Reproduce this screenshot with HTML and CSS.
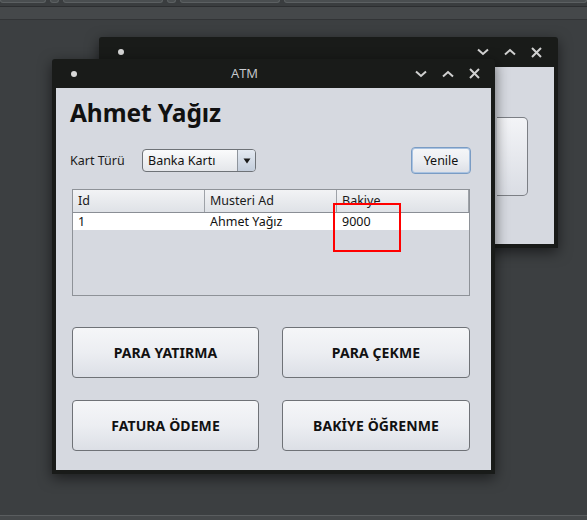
FILE: index.html
```html
<!DOCTYPE html>
<html>
<head>
<meta charset="utf-8">
<link rel="stylesheet" href="styles.css">
</head>
<body>
<div class="desktop">
  <div class="topbar">
    <div class="tabs">
      <span class="tab t1"></span><span class="tab t2"></span><span class="tab t3"></span><span class="tab t2"></span><span class="tab t3"></span><span class="tab t4"></span>
    </div>
    <div class="band"></div>
  </div>

  <div class="window back">
    <div class="titlebar">
      <span class="dot"></span>
      <span class="title"></span>
      <div class="controls">
        <svg width="12" height="8" viewBox="0 0 12 8"><path d="M1 1.5 L6 6 L11 1.5" fill="none" stroke="#d0d0d0" stroke-width="2"/></svg>
        <svg width="12" height="8" viewBox="0 0 12 8"><path d="M1 6.5 L6 2 L11 6.5" fill="none" stroke="#d0d0d0" stroke-width="2"/></svg>
        <svg width="11" height="11" viewBox="0 0 11 11"><path d="M1 1 L10 10 M10 1 L1 10" fill="none" stroke="#d0d0d0" stroke-width="2"/></svg>
      </div>
    </div>
    <div class="back-content">
      <div class="back-btn"></div>
    </div>
  </div>

  <div class="window front">
    <div class="titlebar">
      <span class="dot"></span>
      <span class="title">ATM</span>
      <div class="controls">
        <svg width="12" height="8" viewBox="0 0 12 8"><path d="M1 1.5 L6 6 L11 1.5" fill="none" stroke="#d0d0d0" stroke-width="2"/></svg>
        <svg width="12" height="8" viewBox="0 0 12 8"><path d="M1 6.5 L6 2 L11 6.5" fill="none" stroke="#d0d0d0" stroke-width="2"/></svg>
        <svg width="11" height="11" viewBox="0 0 11 11"><path d="M1 1 L10 10 M10 1 L1 10" fill="none" stroke="#d0d0d0" stroke-width="2"/></svg>
      </div>
    </div>
    <div class="content">
      <h1 class="name">Ahmet Yağız</h1>
      <div class="row">
        <span class="label">Kart Türü</span>
        <div class="combo">
          <span class="combo-text">Banka Kartı</span>
          <span class="combo-arrow"><svg width="8" height="6" viewBox="0 0 8 6"><path d="M0.5 0.5 L7.5 0.5 L4 5.5 Z" fill="#1a1a1a"/></svg></span>
        </div>
        <button class="btn yenile">Yenile</button>
      </div>
      <div class="table">
        <div class="thead">
          <div class="th c1">Id</div>
          <div class="th c2">Musteri Ad</div>
          <div class="th c3">Bakiye</div>
        </div>
        <div class="tr">
          <div class="td c1">1</div>
          <div class="td c2">Ahmet Yağız</div>
          <div class="td c3">9000</div>
        </div>
        <div class="highlight"></div>
      </div>
      <div class="actions">
        <button class="btn action">PARA YATIRMA</button>
        <button class="btn action">PARA ÇEKME</button>
        <button class="btn action">FATURA ÖDEME</button>
        <button class="btn action">BAKİYE ÖĞRENME</button>
      </div>
    </div>
  </div>

  <div class="bottombar"></div>
</div>
</body>
</html>
```

FILE: styles.css
```css
* { box-sizing: border-box; }
html, body { margin: 0; padding: 0; }
body {
  background: #3c3f41;
  font-family: "Noto Sans", "Open Sans", "DejaVu Sans", sans-serif;
  width: 587px;
  height: 520px;
  overflow: hidden;
}
.desktop {
  position: relative;
  width: 587px;
  height: 520px;
}
.topbar { display: flex; flex-direction: column; }
.tabs {
  height: 7px;
  display: flex;
  gap: 4px;
  background: #3a3d3f;
  border-bottom: 1px solid #2c2e30;
}
.tab {
  height: 3px;
  background: #4a4e50;
  border: 1px solid #5c6062;
  border-top: none;
  border-radius: 0 0 3px 3px;
}
.t1 { width: 46px; }
.t2 { width: 9px; }
.t3 { width: 100px; }
.t4 { flex: 1; }
.band {
  height: 13px;
  background: #45484a;
  border-bottom: 1px solid #323436;
}
.bottombar {
  position: absolute;
  left: 0; right: 0; top: 515px; bottom: 0;
  background: #45484a;
  border-top: 1px solid #5a5d5f;
}

.window {
  position: absolute;
  background: #191b19;
  box-shadow: 0 4px 14px rgba(0,0,0,0.55);
  border-radius: 3px 3px 0 0;
  display: flex;
  flex-direction: column;
  padding: 0 4px 4px 4px;
}
.back { left: 99px; top: 37px; width: 459px; height: 211px; }
.front { left: 52px; top: 59px; width: 443px; height: 415px; }

.titlebar {
  height: 29px;
  flex: none;
  display: flex;
  align-items: center;
  position: relative;
  padding-left: 15px;
}
.back .titlebar { height: 30px; }
.dot {
  width: 6px; height: 6px; border-radius: 50%;
  background: #d8d8d8;
}
.title {
  position: absolute;
  left: 0; right: 58px;
  text-align: center;
  color: #c9ccd0;
  font-family: "Open Sans", "Noto Sans", sans-serif;
  font-size: 13px;
  top: 5px;
}
.controls {
  margin-left: auto;
  display: flex;
  align-items: center;
  gap: 15px;
  padding-right: 11px;
  position: relative;
  z-index: 1;
}
.back .controls { padding-right: 12px; }

.back-content {
  flex: 1;
  background: #d6d9e0;
  padding: 50px 26px 0 394px;
}
.back-btn {
  width: 31px;
  height: 79px;
  border: 1px solid #7c7f85;
  border-left: none;
  border-radius: 0 5px 5px 0;
  background: linear-gradient(#f3f4f7, #dadde4);
}

.content {
  flex: 1;
  background: #d6d9e0;
  padding: 0 21px 19px 16px;
  display: flex;
  flex-direction: column;
}
.name {
  margin: 9px 0 0 -2px;
  font-size: 24.5px;
  font-weight: 700;
  line-height: 32px;
  color: #111;
  letter-spacing: -0.1px;
}
.row {
  display: flex;
  align-items: center;
  margin-top: 18px;
  height: 27px;
}
.label {
  font-size: 12.5px;
  color: #1a1a1a;
  margin-left: -2px;
  width: 72px;
}
.combo {
  width: 114px;
  height: 23px;
  display: flex;
  border: 1px solid #6e7277;
  border-radius: 4px;
  background: linear-gradient(#fafbfc, #e4e6ea);
  overflow: hidden;
}
.combo-text {
  flex: 1;
  font-size: 12.5px;
  color: #111;
  padding-left: 5px;
  line-height: 21px;
}
.combo-arrow {
  width: 18px;
  border-left: 1px solid #8e949c;
  background: linear-gradient(#e4eaf2, #c3cddb);
  display: flex;
  align-items: center;
  justify-content: center;
}
.btn {
  font-family: "Noto Sans", "Open Sans", sans-serif;
  border: 1px solid #6f7277;
  border-radius: 4px;
  background: linear-gradient(#f5f6f8 0%, #eceef2 50%, #dcdfe6 100%);
  color: #111;
  padding: 0;
  cursor: default;
}
.yenile {
  margin-left: auto;
  margin-right: -1px;
  width: 60px;
  height: 27px;
  font-size: 12.5px;
  border: 1px solid #7a9cc4;
  box-shadow: inset 0 0 0 1px #a9c3e2;
}

.table {
  position: relative;
  margin-top: 15px;
  height: 107px;
  border: 1px solid #8e9298;
  background: #d6d9e0;
}
.thead {
  display: flex;
  height: 23px;
  background: linear-gradient(#f2f3f5, #dfe2e7);
  border-bottom: 1px solid #8a8e95;
}
.th {
  font-size: 12.5px;
  color: #1a1a1a;
  line-height: 22px;
  padding-left: 5px;
  border-right: 1px solid #9ea2a8;
}
.c1 { width: 132px; }
.c2 { width: 132px; }
.c3 { width: 132px; }
.tr {
  display: flex;
  height: 17px;
  background: #ffffff;
}
.td {
  font-size: 12.5px;
  color: #111;
  line-height: 17px;
  padding-left: 5px;
}
.highlight {
  position: absolute;
  left: 260px;
  top: 13px;
  width: 68px;
  height: 49px;
  border: 2px solid #ff0000;
}

.actions {
  margin-top: auto;
  display: grid;
  grid-template-columns: 187px 188px;
  column-gap: 23px;
  row-gap: 22px;
}
.action {
  height: 51px;
  font-size: 14px;
  font-weight: 700;
  letter-spacing: 0.1px;
}
```
